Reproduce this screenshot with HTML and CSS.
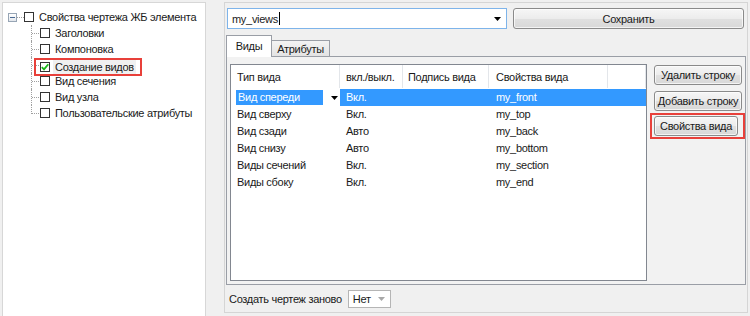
FILE: index.html
```html
<!DOCTYPE html>
<html lang="ru">
<head>
<meta charset="utf-8">
<title>Свойства чертежа ЖБ элемента</title>
<link rel="stylesheet" href="styles.css">
</head>
<body>
<div class="app">
  <div class="tree-panel">
    <div class="root">
      <span class="expander"><span class="minus"></span></span>
      <span class="root-conn"></span>
      <span class="cb"></span>
      <span class="label">Свойства чертежа ЖБ элемента</span>
    </div>
    <ul class="children">
      <li><span class="conn"></span><span class="cb"></span><span class="label">Заголовки</span></li>
      <li><span class="conn"></span><span class="cb"></span><span class="label">Компоновка</span></li>
      <li class="marked"><span class="conn"></span><span class="mark"><span class="cb checked"><svg width="8" height="8" viewBox="0 0 8 8"><path d="M0.8 4.2 L3 6.4 L7.3 1.2" fill="none" stroke="#19b919" stroke-width="1.8"/></svg></span><span class="label sel">Создание видов</span></span></li>
      <li><span class="conn"></span><span class="cb"></span><span class="label">Вид сечения</span></li>
      <li><span class="conn"></span><span class="cb"></span><span class="label">Вид узла</span></li>
      <li class="last"><span class="conn"></span><span class="cb"></span><span class="label">Пользовательские атрибуты</span></li>
    </ul>
  </div>

  <div class="main">
    <div class="toprow">
      <div class="combo">
        <span class="combo-text">my_views<span class="caret-cursor"></span></span>
        <svg class="arrow" width="7" height="4" viewBox="0 0 7 4"><path d="M0 0 H7 L3.5 4 Z" fill="#000"/></svg>
      </div>
      <button class="btn save">Сохранить</button>
    </div>

    <div class="tabs">
      <div class="tab active">Виды</div>
      <div class="tab">Атрибуты</div>
    </div>

    <div class="tab-panel">
      <div class="list">
        <div class="grid header">
          <div class="c c1">Тип вида</div>
          <div class="c c2">вкл./выкл.</div>
          <div class="c c3">Подпись вида</div>
          <div class="c c4">Свойства вида</div>
          <div class="c c5"></div>
        </div>
        <div class="grid row selected">
          <div class="c c1 editor"><span class="edit-sel">Вид спереди</span><svg class="ed-arrow" width="7" height="4" viewBox="0 0 7 4"><path d="M0 0 H7 L3.5 4 Z" fill="#000"/></svg></div>
          <div class="c c2">Вкл.</div>
          <div class="c c3"></div>
          <div class="c c4">my_front</div>
          <div class="c c5"></div>
        </div>
        <div class="grid row">
          <div class="c c1">Вид сверху</div><div class="c c2">Вкл.</div><div class="c c3"></div><div class="c c4">my_top</div><div class="c c5"></div>
        </div>
        <div class="grid row">
          <div class="c c1">Вид сзади</div><div class="c c2">Авто</div><div class="c c3"></div><div class="c c4">my_back</div><div class="c c5"></div>
        </div>
        <div class="grid row">
          <div class="c c1">Вид снизу</div><div class="c c2">Авто</div><div class="c c3"></div><div class="c c4">my_bottom</div><div class="c c5"></div>
        </div>
        <div class="grid row">
          <div class="c c1">Виды сечений</div><div class="c c2">Вкл.</div><div class="c c3"></div><div class="c c4">my_section</div><div class="c c5"></div>
        </div>
        <div class="grid row">
          <div class="c c1">Виды сбоку</div><div class="c c2">Вкл.</div><div class="c c3"></div><div class="c c4">my_end</div><div class="c c5"></div>
        </div>
      </div>
      <div class="side">
        <button class="btn side-btn">Удалить строку</button>
        <button class="btn side-btn">Добавить строку</button>
        <div class="red-box"><button class="btn side-btn props">Свойства вида</button></div>
      </div>
    </div>

    <div class="bottom">
      <span class="bottom-label">Создать чертеж заново</span>
      <div class="small-combo">
        <span>Нет</span>
        <svg width="7" height="4" viewBox="0 0 7 4"><path d="M0 0 H7 L3.5 4 Z" fill="#a8a8a8"/></svg>
      </div>
    </div>
  </div>
</div>
</body>
</html>
```

FILE: styles.css
```css
* { box-sizing: border-box; }
html, body { margin: 0; padding: 0; }
body {
  width: 750px;
  height: 316px;
  overflow: hidden;
  background: #f0f0f0;
  font-family: "Liberation Sans", Arial, sans-serif;
  font-size: 11px;
  letter-spacing: -0.3px;
  color: #1a1a1a;
}
.app {
  display: flex;
  align-items: flex-start;
  padding: 2px 0 0 2px;
  height: 316px;
}

/* ---------- tree ---------- */
.tree-panel {
  width: 204px;
  height: 314px;
  background: #fff;
  border: 1px solid #d7d7d7;
  border-bottom: none;
  padding: 6px 0 0 5px;
  flex: none;
}
.root {
  display: flex;
  align-items: center;
  height: 16px;
}
.expander {
  width: 9px;
  height: 9px;
  border: 1px solid #97a5b5;
  background: linear-gradient(#ffffff, #e3e7ec);
  display: flex;
  align-items: center;
  justify-content: center;
  flex: none;
}
.minus {
  width: 5px;
  height: 1px;
  background: #4a6a93;
}
.root-conn {
  width: 7px;
  height: 1px;
  background: repeating-linear-gradient(90deg, #a0a0a0 0 1px, transparent 1px 2px);
  flex: none;
}
.cb {
  width: 10px;
  height: 10px;
  border: 1px solid #333;
  background: #fff;
  flex: none;
  display: flex;
  align-items: center;
  justify-content: center;
}
.label {
  margin-left: 5px;
  white-space: nowrap;
  line-height: 16px;
}
.children {
  list-style: none;
  margin: 0 0 0 23px;
  padding: 0;
}
.children li {
  display: flex;
  align-items: center;
  height: 16px;
}
.conn {
  width: 9px;
  height: 16px;
  align-self: flex-start;
  flex: none;
  border-left: 1px dotted #a0a0a0;
  background: repeating-linear-gradient(90deg, #a0a0a0 0 1px, transparent 1px 2px) 0 8px / 100% 1px no-repeat;
}
.children li.last .conn { height: 9px; }
.mark {
  display: flex;
  align-items: center;
  margin-left: -6px;
  margin-top: 3px;
  border: 2px solid #e8403a;
  padding: 0 4px 0 4px;
  height: 18px;
}
.label.sel {
  background: #f0f0f0;
  padding: 0 2px;
  margin-left: 3px;
  line-height: 14px;
}

/* ---------- main ---------- */
.main {
  margin-left: 18px;
  width: 524px;
  height: 311px;
  border: 1px solid #d5d5d5;
  padding: 5px 3px 0 2px;
  flex: none;
}
.toprow {
  display: flex;
  gap: 6px;
  height: 21px;
}
.combo {
  width: 280px;
  height: 21px;
  border: 1px solid #7eb4ea;
  background: #fff;
  display: flex;
  align-items: center;
  justify-content: space-between;
  padding: 0 5px 0 4px;
}
.combo-text { display: flex; align-items: center; }
.caret-cursor {
  display: inline-block;
  width: 1px;
  height: 13px;
  background: #000;
  margin-left: 1px;
}
.btn {
  font-family: inherit;
  font-size: 11px;
  letter-spacing: -0.3px;
  color: #1a1a1a;
  border: 1px solid #8a8a8a;
  border-radius: 3px;
  background: linear-gradient(#f6f6f6 0%, #ececec 50%, #e0e0e0 51%, #d8d8d8 100%);
  padding: 0;
  margin: 0;
  white-space: nowrap;
  box-shadow: inset 0 0 0 1px rgba(255,255,255,0.7);
}
.save {
  width: 231px;
  height: 21px;
}

/* tabs */
.tabs {
  display: flex;
  align-items: flex-end;
  height: 21px;
  margin: 6px 0 0 -1px;
  position: relative;
  z-index: 1;
}
.tab {
  height: 16px;
  width: 58px;
  border: 1px solid #9a9ea6;
  border-bottom: none;
  border-left: none;
  background: linear-gradient(#f3f3f3, #e3e3e3);
  display: flex;
  align-items: center;
  justify-content: center;
  line-height: 14px;
}
.tab.active {
  width: 46px;
  height: 22px;
  background: #fff;
  border-left: 1px solid #9a9ea6;
  margin-bottom: -1px;
  padding-bottom: 2px;
}

.tab-panel {
  margin-left: -1px;
  width: 520px;
  height: 229px;
  border: 1px solid #9a9ea6;
  background: #f2f2f2;
  display: flex;
  align-items: flex-start;
  padding: 7px 3px 0 3px;
}
.list {
  width: 417px;
  height: 217px;
  border: 1px solid #828790;
  background: #fff;
  flex: none;
}
.grid {
  display: grid;
  grid-template-columns: 109px 63px 86px 119px 1fr;
}
.header {
  height: 23px;
  margin-bottom: 1px;
}
.header .c {
  border-right: 1px solid #e3e6ea;
  line-height: 24px;
}
.c {
  white-space: nowrap;
  overflow: hidden;
  padding-left: 6px;
}
.c2 { padding-left: 6px; }
.c3 { padding-left: 5px; }
.c4 { padding-left: 7px; }
.row {
  height: 17px;
  line-height: 17px;
}
.row.selected .c2,
.row.selected .c3,
.row.selected .c4,
.row.selected .c5 {
  background: #3399ff;
  color: #fff;
}
.editor {
  display: flex;
  align-items: center;
  padding-left: 5px;
  background: #fff;
}
.edit-sel {
  width: 87px;
  height: 15px;
  line-height: 15px;
  background: #3399ff;
  color: #fff;
  padding-left: 2px;
}
.ed-arrow { margin-left: 8px; }

.side {
  margin-left: 7px;
  display: flex;
  flex-direction: column;
  align-items: flex-start;
  padding-top: 1px;
}
.side-btn {
  width: 88px;
  height: 20px;
  margin-bottom: 6px;
}
.red-box {
  margin-left: -4px;
  margin-top: -4px;
  border: 2px solid #e8403a;
  padding: 1px 5px 1px 2px;
}
.side-btn.props {
  width: 84px;
  margin: 0;
}

/* bottom */
.bottom {
  display: flex;
  align-items: center;
  margin-top: 5px;
  height: 18px;
  padding-left: 2px;
}
.small-combo {
  margin-left: 6px;
  width: 43px;
  height: 18px;
  border: 1px solid #b5b5b5;
  background: #fff;
  display: flex;
  align-items: center;
  justify-content: space-between;
  padding: 0 5px 0 4px;
}
```
